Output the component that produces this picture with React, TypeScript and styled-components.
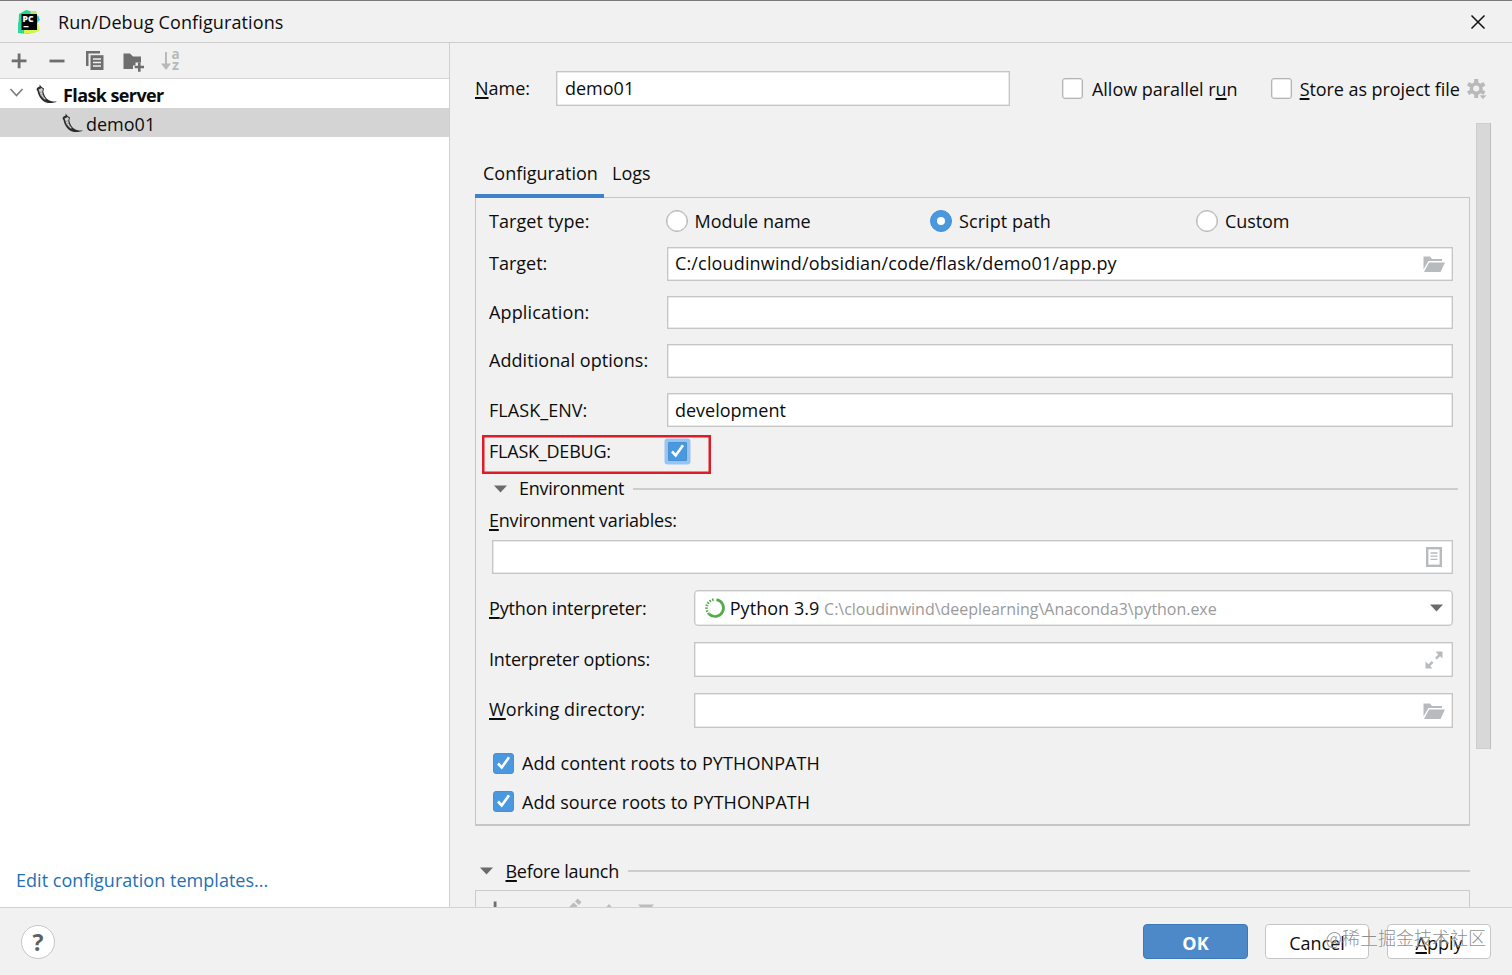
import React from "react";
import styled, { createGlobalStyle, css } from "styled-components";

const GlobalStyle = createGlobalStyle`
  *, *::before, *::after { box-sizing: border-box; }
  html, body { margin: 0; padding: 0; overflow: hidden; }
  body {
    font-family: "Open Sans", "Noto Sans", "Noto Sans CJK SC", sans-serif;
    font-size: 18px;
    color: #0c0c0c;
    background: #f1f1f1;
  }
  svg { display: block; flex: none; overflow: visible; }
`;

const Dialog = styled.div`
  position: relative;
  display: flex;
  flex-direction: column;
  width: 1512px;
  height: 975px;
  background: #f1f1f1;
  border-top: 1px solid #7b797b;
  overflow: hidden;
`;

const TitleBar = styled.header`
  display: flex;
  align-items: center;
  height: 42px;
  padding: 0 26px 0 17px;
  border-bottom: 1px solid #cdcdcd;
  flex: none;
`;

const Text = styled.span<{ $ls?: number; $size?: number; $bold?: boolean; $color?: string; $up?: number; $down?: number }>`
  white-space: pre;
  letter-spacing: ${(p) => p.$ls ?? 0}px;
  padding-bottom: ${(p) => (p.$up ?? 0) * 2}px;
  padding-top: ${(p) => (p.$down ?? 0) * 2}px;
  ${(p) => p.$size && css`font-size: ${p.$size}px;`}
  ${(p) => p.$bold && css`font-weight: 700;`}
  ${(p) => p.$color && css`color: ${p.$color};`}
`;

const Title = styled(Text)`
  flex: 1;
  margin-left: 17px;
`;

const Mnemonic = styled.span`
  text-decoration: underline;
  text-decoration-thickness: 1.5px;
  text-underline-offset: 2px;
  text-decoration-skip-ink: none;
`;

const Body = styled.div`
  display: flex;
  height: 865px;
  flex: none;
  border-bottom: 1px solid #d2d2d2;
`;

const Sidebar = styled.aside`
  display: flex;
  flex-direction: column;
  width: 450px;
  flex: none;
  background: #fff;
  border-right: 1px solid #cfcfcf;
`;

const Toolbar = styled.div`
  display: flex;
  align-items: center;
  gap: 16px;
  height: 36px;
  padding-left: 8px;
  background: #f1f1f1;
  border-bottom: 1px solid #d4d4d4;
`;

const TreeRow = styled.div<{ $level: number; $selected?: boolean }>`
  display: flex;
  align-items: center;
  height: 29px;
  padding-top: 1px;
  padding-left: ${(p) => (p.$level ? 62 : 9)}px;
  background: ${(p) => (p.$selected ? "#d4d4d4" : "transparent")};
`;

const TreeIcon = styled.span<{ $ml?: number; $mr?: number }>`
  display: flex;
  width: 22px;
  margin-left: ${(p) => p.$ml ?? 0}px;
  margin-right: ${(p) => p.$mr ?? 2}px;
`;

const TemplatesLink = styled.a`
  margin-top: auto;
  padding: 0 0 15px 16px;
  color: #2470b3;
`;

const Main = styled.main`
  display: flex;
  flex-direction: column;
  flex: 1;
  min-width: 0;
  padding-left: 25px;
  overflow: hidden;
`;

const NameRow = styled.div`
  display: flex;
  align-items: center;
  height: 35px;
  margin-top: 28px;
  flex: none;
`;

const NameLabel = styled.label`
  width: 81px;
  padding-bottom: 2px;
`;

const Field = styled.div<{ $w?: number; $h?: number; $round?: boolean; $pad?: string }>`
  display: flex;
  align-items: center;
  justify-content: space-between;
  width: ${(p) => (p.$w ? `${p.$w}px` : "auto")};
  flex: ${(p) => (p.$w ? "none" : 1)};
  height: ${(p) => p.$h ?? 34}px;
  padding: ${(p) => p.$pad ?? "0 8px"};
  background: #fff;
  border: 1px solid #c6c6c6;
  border-radius: ${(p) => (p.$round ? 4 : 0)}px;
  box-shadow: inset 0 0 0 0.5px #d4d4d4;
`;

const CheckLabel = styled.label<{ $ml?: number; $gap?: number }>`
  display: flex;
  align-items: center;
  gap: ${(p) => p.$gap ?? 9}px;
  margin-left: ${(p) => p.$ml ?? 0}px;
`;

const Box = styled.span<{ $on?: boolean; $focus?: boolean }>`
  display: flex;
  align-items: center;
  justify-content: center;
  width: ${(p) => (p.$focus ? 19 : 21)}px;
  height: ${(p) => (p.$focus ? 19 : 21)}px;
  flex: none;
  border-radius: ${(p) => (p.$focus ? 1 : 3)}px;
  background: ${(p) => (p.$on ? "#4a98df" : "#fff")};
  border: ${(p) => (p.$on ? "1px solid #4690d4" : "1px solid #b4b4b4")};
  ${(p) => !p.$on && css`box-shadow: inset 0 0 0 0.5px #cfcfcf;`}
  ${(p) => p.$focus && css`
    margin-bottom: 1px;
    box-shadow: 0 0 0 3.5px #98c4f1;
  `}
`;

const GearSlot = styled.span`
  margin-left: 7px;
  padding-top: 2px;
`;

const ScrollRegion = styled.div`
  display: flex;
  flex: 1;
  margin-top: 17px;
  min-height: 0;
`;

const ScrollContent = styled.div`
  width: 995px;
  flex: none;
  overflow: hidden;
`;

const ScrollThumb = styled.div`
  width: 15px;
  height: 626px;
  margin-left: 6px;
  background: #d8d8d8;
  border: 1px solid #cdcdcd;
  border-right-color: #bebebe;
`;

const Tabs = styled.div`
  display: flex;
  height: 75px;
  padding-top: 26px;
`;

const Tab = styled.div<{ $active?: boolean }>`
  display: flex;
  align-items: center;
  height: 49px;
  width: ${(p) => (p.$active ? 129 : 54)}px;
  padding: 2px 0 0 8px;
  position: relative;
  z-index: 1;
  border-bottom: 4px solid ${(p) => (p.$active ? "#3f82c8" : "transparent")};
`;

const Panel = styled.section`
  display: flex;
  flex-direction: column;
  height: 629px;
  margin-top: -1px;
  padding: 0 16px 0 13px;
  border: 1px solid #c6c6c6;
  border-bottom-width: 2px;
`;

const Row = styled.div<{ $h: number; $mt?: number; $pl?: number }>`
  position: relative;
  display: flex;
  align-items: center;
  flex: none;
  height: ${(p) => p.$h}px;
  margin-top: ${(p) => p.$mt ?? 0}px;
  padding-left: ${(p) => p.$pl ?? 0}px;
`;

const RowLabel = styled.label<{ $w: number; $ls?: number; $up?: number }>`
  width: ${(p) => p.$w}px;
  flex: none;
  white-space: pre;
  letter-spacing: ${(p) => p.$ls ?? 0}px;
  padding-bottom: ${(p) => (p.$up ?? 0) * 2}px;
`;

const RadioLabel = styled.label<{ $w: number }>`
  display: flex;
  align-items: center;
  gap: 7px;
  width: ${(p) => p.$w}px;
`;

const Radio = styled.span<{ $on?: boolean }>`
  display: flex;
  align-items: center;
  justify-content: center;
  width: 22px;
  height: 22px;
  border-radius: 50%;
  background: ${(p) => (p.$on ? "#4a98df" : "#fff")};
  border: 1px solid ${(p) => (p.$on ? "#4690d4" : "#b4b4b4")};
  ${(p) => !p.$on && css`box-shadow: inset 0 0 0 0.5px #c4c4c4;`}
  &::after {
    content: "";
    width: 8px;
    height: 8px;
    border-radius: 50%;
    background: #fff;
  }
`;

const Highlight = styled.div`
  position: absolute;
  left: -7px;
  top: 0;
  width: 229px;
  height: 39px;
  border: 2px solid #dc1c26;
  box-shadow: inset 0 0 0 0.5px #dc1c26;
`;

const SectionLine = styled.div<{ $bleed?: number }>`
  flex: 1;
  height: 2px;
  margin-left: 9px;
  margin-right: ${(p) => -(p.$bleed ?? 0)}px;
  background: #cdcdcd;
`;

const Interpreter = styled.span`
  display: flex;
  align-items: center;
`;

const LaunchHeader = styled.div`
  display: flex;
  align-items: center;
  height: 28px;
  margin-top: 31px;
  padding-left: 5px;
`;

const LaunchList = styled.div`
  display: flex;
  align-items: flex-start;
  height: 60px;
  margin-top: 5px;
  padding: 7px 0 0 10px;
  gap: 17px;
  border: 1px solid #cbcbcb;
`;

const Footer = styled.footer`
  display: flex;
  align-items: center;
  height: 67px;
  padding: 0 21px;
`;

const HelpButton = styled.button`
  display: flex;
  align-items: center;
  justify-content: center;
  width: 34px;
  height: 34px;
  margin-right: auto;
  padding: 0;
  border: 1.5px solid #c6c6c6;
  border-radius: 50%;
  background: #fff;
  color: #5f5f5f;
  font: 700 23px "Open Sans", sans-serif;
`;

const Button = styled.button<{ $primary?: boolean; $ml?: number }>`
  width: ${(p) => (p.$primary ? 105 : 104)}px;
  height: 35px;
  margin-left: ${(p) => p.$ml ?? 0}px;
  padding: 2px 0 0;
  border: 1.5px solid ${(p) => (p.$primary ? "#3f78b8" : "#c6c6c6")};
  border-radius: 4px;
  background: ${(p) => (p.$primary ? "#4d89c9" : "#fff")};
  color: ${(p) => (p.$primary ? "#fff" : "#0c0c0c")};
  font-family: inherit;
  font-size: 18px;
  font-weight: ${(p) => (p.$primary ? 700 : 400)};
`;

const Watermark = styled.div`
  position: absolute;
  right: 26px;
  bottom: 24px;
  font-family: "Noto Sans CJK SC", sans-serif;
  font-size: 18px;
  font-weight: 300;
  line-height: 27px;
  color: rgba(110, 110, 110, 0.8);
  text-shadow: 0 0 1px #fff;
  white-space: nowrap;
`;

const AppLogo = () => (
  <svg width="24" height="24" viewBox="0 0 24 24">
    <path d="M2 4L9 0l8 2 5 5-1 6-2 9-9 2-9-1z" fill="#21d789" />
    <path d="M17 4l4.500 3 1.500 3-3 2z" fill="#18c8ee" />
    <path d="M13 1l6 0 1.500 5-6 1z" fill="#a6f06a" />
    <path d="M1 13l5-4v14l-5-1z" fill="#2fd6a0" />
    <path d="M7 20l14-8 1.500 9-6.500 2-9 1z" fill="#d3f84a" />
    <rect x="4.500" y="4" width="15.500" height="16" fill="#050505" />
    <text x="5.600" y="11.800" fontFamily="Open Sans, sans-serif" fontWeight="800" fontSize="8.500" fill="#fff">PC</text>
    <rect x="6.500" y="16" width="5" height="1.300" fill="#fff" />
  </svg>
);

const CloseIcon = () => (
  <svg width="16" height="16" viewBox="0 0 16 16" stroke="#111" strokeWidth="1.500">
    <path d="M1.500 1.500l13 13M14.500 1.500l-13 13" />
  </svg>
);

const PlusIcon = () => (
  <svg width="22" height="22" viewBox="0 0 22 22" fill="#6e6e6e">
    <path d="M9.700 3.500h2.800v6h6v2.800h-6v6H9.700v-6h-6V9.500h6z" />
  </svg>
);

const MinusIcon = () => (
  <svg width="22" height="22" viewBox="0 0 22 22" fill="#6e6e6e">
    <path d="M3.500 9.600h15v2.800h-15z" />
  </svg>
);

const CopyIcon = () => (
  <svg width="22" height="22" viewBox="0 0 22 22">
    <path d="M2 1h14v2.500H4.500V16H2z" fill="#6e6e6e" />
    <path d="M6.500 5.200H19.500V20H6.500z" fill="#6e6e6e" />
    <path d="M9 9h8M9 12.500h8M9 16h8" stroke="#f1f1f1" strokeWidth="1.400" />
  </svg>
);

const NewFolderIcon = () => (
  <svg width="22" height="22" viewBox="0 0 22 22" fill="#6e6e6e">
    <path d="M1.500 3.500h6.500l3 3h8v6h-5.500v3H11V19H1.500z" />
    <path d="M16 12.500h2.600v3.200h3.400v2.600h-3.400v3.400H16v-3.400h-3.300v-2.600H16z" />
  </svg>
);

const SortIcon = () => (
  <svg width="24" height="22" viewBox="0 0 24 22">
    <path d="M5 2h2v11.500h4L6 20 1 13.500h4z" fill="#b9b9b9" />
    <text x="11.500" y="9.300" fontFamily="Open Sans, sans-serif" fontWeight="700" fontSize="13.500" fill="#b9b9b9">a</text>
    <text x="12" y="19.800" fontFamily="Open Sans, sans-serif" fontWeight="700" fontSize="14.500" fill="#b9b9b9">z</text>
  </svg>
);

const FlaskIcon = () => (
  <svg width="22" height="20" viewBox="0 0 22 20">
    <path
      d="M3.600 0.500L3.600 2.600 1.200 3.800 0.500 5.800 1.500 7C2.200 12 5.500 16.500 9.500 18.200 13 19.600 18 19.300 21 17.600 18 17.600 15.500 17.600 13 16.300 9.800 14.500 7.800 11 7.300 7.500L8 4.600 5.600 2.900z"
      fill="#2c2c2c"
    />
    <path d="M2.500 5.600l3.400-1.600 1 1.600-.7 2.200C6.600 11 8 13.500 10 15.200L8.600 15.400C5.500 13 4 10.500 3.400 7.500z" fill="#d2d2d2" />
    <path d="M3.500 8.700l3-1M4.300 11.500l2.800-1.300M6 13.700l2.300-1.500" stroke="#777" strokeWidth="0.700" />
  </svg>
);

const ChevronIcon = () => (
  <svg width="14" height="10" viewBox="0 0 14 10" fill="none" stroke="#7c7c7c" strokeWidth="1.600">
    <path d="M1.500 0L7.500 6.500l6-6.500" />
  </svg>
);

const CheckIcon = () => (
  <svg width="15" height="15" viewBox="0 0 15 15" fill="none" stroke="#fff" strokeWidth="2.600">
    <path d="M2 7.500l3.700 4L13 1.300" />
  </svg>
);

const GearIcon = () => (
  <svg width="20" height="21" viewBox="0 0 20 21">
    <g fill="#b9b9b9">
      {[0, 60, 120].map((a) => (
        <rect key={a} x="7.200" y="0" width="4" height="19" transform={`rotate(${a} 9.200 9.500)`} />
      ))}
      <circle cx="9.200" cy="9.500" r="6.500" />
      <circle cx="9.200" cy="9.500" r="3" fill="#f1f1f1" />
      <path d="M12 16h8l-4 4.500z" stroke="#f1f1f1" strokeWidth="0.600" />
    </g>
  </svg>
);

const FolderIcon = () => (
  <svg width="22" height="18" viewBox="0 0 22 18" fill="#b7bbbe">
    <path d="M0.500 1.500h6.500l2 2.500h10v2H5.500L0.500 14.500z" />
    <path d="M6 7.500h16L17.500 17H1z" />
  </svg>
);

const ListIcon = () => (
  <svg width="16" height="20" viewBox="0 0 16 20" fill="none" stroke="#b7bbbe">
    <rect x="1.200" y="1.200" width="13.600" height="17.600" strokeWidth="2.400" />
    <path d="M4.500 6h7M4.500 9.200h7M4.500 12.400h7" strokeWidth="1.300" />
  </svg>
);

const ExpandIcon = () => (
  <svg width="18" height="18" viewBox="0 0 18 18" fill="#b7bbbe">
    <path d="M10.500 0.500h7v7l-2.400-2.300-3.300 3.300-1.700-1.700 3.200-3.200z" />
    <path d="M0.500 10.500v7h7l-2.300-2.400 3.300-3.300-1.700-1.700-3.300 3.200z" />
  </svg>
);

const TriangleIcon = () => (
  <svg width="13" height="8" viewBox="0 0 13 8" fill="#6b6b6b">
    <path d="M0 0.500h13L6.500 7.500z" />
  </svg>
);

const CondaIcon = () => (
  <svg width="20" height="20" viewBox="0 0 20 20" fill="none" stroke="#52ab48">
    <path d="M11.500 1.600A8.500 8.500 0 1 1 4 16" strokeWidth="2.700" />
    <path d="M4 16A8.500 8.500 0 0 1 9.800 1.500" strokeWidth="2.600" strokeDasharray="1.500 1.300" />
  </svg>
);

const AddTaskIcon = () => (
  <svg width="20" height="20" viewBox="0 0 20 20" fill="#6e6e6e">
    <path d="M7.700 3.500h2.800v5.500h5.500v2.400h-5.500V17H7.700v-5.600H2V9h5.700z" />
  </svg>
);

const PencilIcon = () => (
  <svg width="22" height="22" viewBox="0 0 22 22" fill="#bcbcbc">
    <path d="M17.500 0.500l4 3.500-2.500 3-4-3.500zM13.500 4.500l4 3.600L8 18l-4 1 0-4.500z" />
  </svg>
);

const MoveIcon = ({ down }: { down?: boolean }) => (
  <svg width="20" height="20" viewBox="0 0 20 20" fill="#bcbcbc">
    <path d={down ? "M2 6.500h16l-8 9z" : "M10 6l8 9H2z"} />
  </svg>
);

const ENV_ROWS = [
  { label: "Application:", value: "", h: 33, ls: 0.15, up: 1 },
  { label: "Additional options:", value: "", h: 34, ls: 0.07, up: 1 },
  { label: "FLASK_ENV:", value: "development", h: 34, ls: 0.05, up: 0 },
];

export default function App() {
  return (
    <>
      <GlobalStyle />
      <Dialog>
        <TitleBar>
          <AppLogo />
          <Title $ls={0.11}>Run/Debug Configurations</Title>
          <CloseIcon />
        </TitleBar>
        <Body>
          <Sidebar>
            <Toolbar>
              <PlusIcon />
              <MinusIcon />
              <CopyIcon />
              <NewFolderIcon />
              <SortIcon />
            </Toolbar>
            <TreeRow $level={0}>
              <ChevronIcon />
              <TreeIcon $ml={13} $mr={5}><FlaskIcon /></TreeIcon>
              <Text $bold $ls={-0.6} $down={0.5}>Flask server</Text>
            </TreeRow>
            <TreeRow $level={1} $selected>
              <TreeIcon><FlaskIcon /></TreeIcon>
              <Text $down={0.5}>demo01</Text>
            </TreeRow>
            <TemplatesLink><Text $ls={0.03}>Edit configuration templates...</Text></TemplatesLink>
          </Sidebar>
          <Main>
            <NameRow>
              <NameLabel><Mnemonic>N</Mnemonic>ame:</NameLabel>
              <Field $w={454} $h={35}><Text $up={1}>demo01</Text></Field>
              <CheckLabel $ml={52}>
                <Box />
                <Text $ls={-0.03}>Allow parallel r<Mnemonic>u</Mnemonic>n</Text>
              </CheckLabel>
              <CheckLabel $ml={33} $gap={8}>
                <Box />
                <Text $ls={-0.06}><Mnemonic>S</Mnemonic>tore as project file</Text>
              </CheckLabel>
              <GearSlot><GearIcon /></GearSlot>
            </NameRow>
            <ScrollRegion>
              <ScrollContent>
                <Tabs>
                  <Tab $active><Text>Configuration</Text></Tab>
                  <Tab><Text>Logs</Text></Tab>
                </Tabs>
                <Panel>
                  <Row $h={46}>
                    <RowLabel $w={176.5} $ls={0.08}>Target type:</RowLabel>
                    <RadioLabel $w={264.5}><Radio /><Text>Module name</Text></RadioLabel>
                    <RadioLabel $w={266}><Radio $on /><Text $ls={0.08}>Script path</Text></RadioLabel>
                    <RadioLabel $w={140}><Radio /><Text $ls={-0.1}>Custom</Text></RadioLabel>
                  </Row>
                  <Row $h={34} $mt={3}>
                    <RowLabel $w={178} $up={1}>Target:</RowLabel>
                    <Field $pad="0 7px"><Text $ls={0.15} $up={1}>C:/cloudinwind/obsidian/code/flask/demo01/app.py</Text><FolderIcon /></Field>
                  </Row>
                  {ENV_ROWS.map((r) => (
                    <Row key={r.label} $h={r.h} $mt={15}>
                      <RowLabel $w={178} $ls={r.ls} $up={r.up}>{r.label}</RowLabel>
                      <Field $h={r.h} $pad="0 7px"><Text>{r.value}</Text></Field>
                    </Row>
                  ))}
                  <Row $h={33} $mt={8}>
                    <RowLabel $w={179} $ls={-0.22} $up={1}>FLASK_DEBUG:</RowLabel>
                    <Box $on $focus><CheckIcon /></Box>
                    <Highlight />
                  </Row>
                  <Row $h={31} $mt={5} $pl={5}>
                    <TriangleIcon />
                    <CheckLabel $ml={12}><Text $ls={-0.27} $up={1}>Environment</Text></CheckLabel>
                    <SectionLine $bleed={5} />
                  </Row>
                  <Row $h={32}>
                    <RowLabel $w={300} $ls={-0.22}><Mnemonic>E</Mnemonic>nvironment variables:</RowLabel>
                  </Row>
                  <Row $h={34} $mt={4} $pl={3}>
                    <Field $pad="0 10px 1px"><span /><ListIcon /></Field>
                  </Row>
                  <Row $h={36} $mt={16}>
                    <RowLabel $w={205} $ls={-0.15}><Mnemonic>P</Mnemonic>ython interpreter:</RowLabel>
                    <Field $h={36} $round $pad="0 9px 0 10px">
                      <Interpreter>
                        <CondaIcon />
                        <Text $ls={0.05}>{" Python 3.9 "}</Text>
                        <Text $size={16} $ls={-0.03} $color="#9a9a9a" $down={0.5}>C:\cloudinwind\deeplearning\Anaconda3\python.exe</Text>
                      </Interpreter>
                      <TriangleIcon />
                    </Field>
                  </Row>
                  <Row $h={35} $mt={16}>
                    <RowLabel $w={205} $ls={-0.2} $up={1}>Interpreter options:</RowLabel>
                    <Field $h={35} $pad="0 9px"><span /><ExpandIcon /></Field>
                  </Row>
                  <Row $h={35} $mt={16}>
                    <RowLabel $w={205} $ls={0.1} $up={1.5}><Mnemonic>W</Mnemonic>orking directory:</RowLabel>
                    <Field $h={35} $pad="0 7px"><span /><FolderIcon /></Field>
                  </Row>
                  <Row $h={38} $mt={16} $pl={4}>
                    <CheckLabel $gap={8}><Box $on><CheckIcon /></Box><Text $ls={0.1}>Add content roots to PYTHONPATH</Text></CheckLabel>
                  </Row>
                  <Row $h={39} $pl={4}>
                    <CheckLabel $gap={8}><Box $on><CheckIcon /></Box><Text $ls={0.04}>Add source roots to PYTHONPATH</Text></CheckLabel>
                  </Row>
                </Panel>
                <LaunchHeader>
                  <TriangleIcon />
                  <CheckLabel $ml={12.5}><Text $ls={-0.28} $up={0.5}><Mnemonic>B</Mnemonic>efore launch</Text></CheckLabel>
                  <SectionLine />
                </LaunchHeader>
                <LaunchList>
                  <AddTaskIcon />
                  <svg width="20" height="20" />
                  <PencilIcon />
                  <MoveIcon />
                  <MoveIcon down />
                </LaunchList>
              </ScrollContent>
              <ScrollThumb />
            </ScrollRegion>
          </Main>
        </Body>
        <Footer>
          <HelpButton>?</HelpButton>
          <Button $primary>OK</Button>
          <Button $ml={17}>Cancel</Button>
          <Button $ml={18}><Mnemonic>A</Mnemonic>pply</Button>
        </Footer>
        <Watermark>@稀土掘金技术社区</Watermark>
      </Dialog>
    </>
  );
}
